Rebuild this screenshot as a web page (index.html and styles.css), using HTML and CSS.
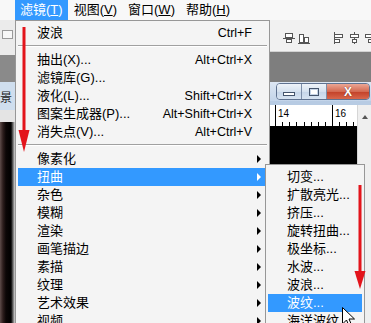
FILE: index.html
```html
<!DOCTYPE html>
<html lang="zh-CN">
<head>
<meta charset="utf-8">
<title>滤镜 - 扭曲</title>
<link rel="stylesheet" href="styles.css">
</head>
<body>
<div class="app">
  <div class="menubar">
    <span class="mb-item active">滤镜(<u>T</u>)</span>
    <span class="mb-item">视图(<u>V</u>)</span>
    <span class="mb-item">窗口(<u>W</u>)</span>
    <span class="mb-item">帮助(<u>H</u>)</span>
  </div>
  <div class="work">
    <div class="side">
      <div class="side-top"><span class="side-box"></span></div>
      <div class="side-gray"></div>
      <div class="side-layer"><span>背景</span></div>
      <div class="side-gap"></div>
      <div class="side-dark"></div>
    </div>
    <div class="main">
      <div class="toolbar">
        <svg class="tb-icon" width="12" height="12" viewBox="0 0 12 12"><path d="M0 6.5h12" stroke="#555"/><rect x="2.5" y="1.5" width="7" height="4" fill="#fff" stroke="#555"/><rect x="3.5" y="7.5" width="5" height="3" fill="#fff" stroke="#555"/></svg>
        <svg class="tb-icon" width="12" height="12" viewBox="0 0 12 12"><path d="M0 11.5h12" stroke="#555"/><rect x="1.5" y="2.5" width="4" height="8" fill="#fff" stroke="#555"/><rect x="6.5" y="5.5" width="4" height="5" fill="#fff" stroke="#555"/></svg>
        <span class="tb-gap"></span>
        <svg class="tb-icon" width="12" height="12" viewBox="0 0 12 12"><path d="M1.5 0v12" stroke="#555"/><rect x="1.5" y="2.5" width="8" height="3" fill="#fff" stroke="#555"/><rect x="1.5" y="7.5" width="5" height="3" fill="#fff" stroke="#555"/></svg>
        <svg class="tb-icon" width="12" height="12" viewBox="0 0 12 12"><path d="M6.5 0v12" stroke="#555"/><rect x="2.5" y="2.5" width="8" height="3" fill="#fff" stroke="#555"/><rect x="4.5" y="7.5" width="4" height="3" fill="#fff" stroke="#555"/></svg>
        <svg class="tb-icon last" width="12" height="12" viewBox="0 0 12 12"><path d="M10.5 0v12" stroke="#555"/><rect x="2.5" y="2.5" width="8" height="3" fill="#fff" stroke="#555"/><rect x="5.5" y="7.5" width="5" height="3" fill="#fff" stroke="#555"/></svg>
      </div>
      <div class="band"></div>
      <div class="doc">
        <div class="titlebar">
          <div class="winbtns">
            <span class="wb min"><span class="min-bar"></span></span>
            <span class="wb max"><span class="max-box"></span></span>
            <span class="wb close">X</span>
          </div>
        </div>
        <div class="frame"></div>
        <div class="doc-body">
          <div class="doc-content">
            <div class="ruler"><span class="rl">14</span><span class="rl">16</span></div>
            <div class="canvas"></div>
          </div>
          <div class="vscroll"><span class="up"></span></div>
        </div>
      </div>
    </div>
  </div>
</div>

<div class="menu main-menu">
  <div class="item"><span class="label">波浪</span><span class="key">Ctrl+F</span><span class="arrow-col"></span></div>
  <div class="sep"></div>
  <div class="item"><span class="label">抽出(X)...</span><span class="key">Alt+Ctrl+X</span><span class="arrow-col"></span></div>
  <div class="item"><span class="label">滤镜库(G)...</span><span class="arrow-col"></span></div>
  <div class="item"><span class="label">液化(L)...</span><span class="key">Shift+Ctrl+X</span><span class="arrow-col"></span></div>
  <div class="item"><span class="label">图案生成器(P)...</span><span class="key">Alt+Shift+Ctrl+X</span><span class="arrow-col"></span></div>
  <div class="item"><span class="label">消失点(V)...</span><span class="key">Alt+Ctrl+V</span><span class="arrow-col"></span></div>
  <div class="sep"></div>
  <div class="item"><span class="label">像素化</span><span class="arrow-col"><span class="tri"></span></span></div>
  <div class="item hl"><span class="label">扭曲</span><span class="arrow-col"><span class="tri"></span></span></div>
  <div class="item"><span class="label">杂色</span><span class="arrow-col"><span class="tri"></span></span></div>
  <div class="item"><span class="label">模糊</span><span class="arrow-col"><span class="tri"></span></span></div>
  <div class="item"><span class="label">渲染</span><span class="arrow-col"><span class="tri"></span></span></div>
  <div class="item"><span class="label">画笔描边</span><span class="arrow-col"><span class="tri"></span></span></div>
  <div class="item"><span class="label">素描</span><span class="arrow-col"><span class="tri"></span></span></div>
  <div class="item"><span class="label">纹理</span><span class="arrow-col"><span class="tri"></span></span></div>
  <div class="item"><span class="label">艺术效果</span><span class="arrow-col"><span class="tri"></span></span></div>
  <div class="item"><span class="label">视频</span><span class="arrow-col"><span class="tri"></span></span></div>
</div>

<div class="menu sub-menu">
  <div class="item"><span class="label">切变...</span></div>
  <div class="item"><span class="label">扩散亮光...</span></div>
  <div class="item"><span class="label">挤压...</span></div>
  <div class="item"><span class="label">旋转扭曲...</span></div>
  <div class="item"><span class="label">极坐标...</span></div>
  <div class="item"><span class="label">水波...</span></div>
  <div class="item"><span class="label">波浪...</span></div>
  <div class="item hl"><span class="label">波纹...</span></div>
  <div class="item"><span class="label">海洋波纹...</span></div>
</div>

<svg class="arrows" width="371" height="323" viewBox="0 0 371 323">
  <line x1="24" y1="27" x2="24" y2="134" stroke="#e3141b" stroke-width="3"/>
  <polygon points="18.5,130 29.5,130 24,152" fill="#e3141b"/>
  <line x1="360" y1="185" x2="360" y2="275" stroke="#e3141b" stroke-width="3"/>
  <polygon points="354.5,271 365.5,271 360,289" fill="#e3141b"/>
</svg>

<svg class="cursor" width="14" height="22" viewBox="0 0 14 22">
  <path d="M0.5 0.5 L0.5 17 L4.5 13 L7.5 20 L10 19 L7 12 L12.5 12 Z" fill="#fff" stroke="#000" stroke-width="1" stroke-linejoin="round"/>
</svg>
</body>
</html>
```

FILE: styles.css
```css
* { box-sizing: border-box; margin: 0; padding: 0; }

html, body {
  width: 371px;
  height: 323px;
  overflow: hidden;
}

body {
  position: relative;
  font-family: "Liberation Sans", "Noto Sans CJK SC", sans-serif;
  font-size: 13px;
  color: #000;
  background: #f0f0f0;
}

.app {
  display: flex;
  flex-direction: column;
  width: 371px;
  height: 323px;
}

/* ---------- menubar ---------- */
.menubar {
  flex: none;
  height: 20px;
  display: flex;
  gap: 1px;
  padding-left: 15px;
  background: #f8f8f8;
  line-height: 20px;
  white-space: nowrap;
}

.mb-item { padding: 0 5px; }
.mb-item.active { background: #3399ff; color: #fff; }

/* ---------- workspace ---------- */
.work {
  flex: 1;
  display: flex;
  min-height: 0;
}

.side {
  width: 15px;
  flex: none;
  display: flex;
  flex-direction: column;
}

.side-top {
  height: 35px;
  background: #ebebeb;
  padding: 10px 0 0 2px;
}

.side-box {
  display: block;
  width: 11px;
  height: 9px;
  border: 1px solid #9a9a9a;
  background: #f7f7f7;
}

.side-gray { height: 27px; background: #8a8a8a; }

.side-layer {
  height: 28px;
  background: #cfdeee;
  display: flex;
  justify-content: flex-end;
  align-items: center;
  overflow: hidden;
  white-space: nowrap;
  font-size: 12px;
  padding-right: 3px;
  color: #222;
}

.side-gap { height: 12px; background: #e4e4e4; }

.side-dark {
  flex: 1;
  background: linear-gradient(to right, #5e4c4a 0, #2c1d1c 3px, #0b0606 6px, #000 11px, #6a6a6a 13px, #d8d8d8 15px);
}

.main {
  flex: 1;
  min-width: 0;
  display: flex;
  flex-direction: column;
}

.toolbar {
  height: 32px;
  flex: none;
  display: flex;
  justify-content: flex-end;
  align-items: center;
  gap: 3px;
  background: #f1f1f1;
  border-bottom: 1px solid #d2d2d2;
  overflow: hidden;
  padding-top: 4px;
}

.tb-icon { flex: none; }
.tb-icon.last { margin-right: -4px; }
.tb-gap { width: 17px; flex: none; }

.band {
  height: 30px;
  flex: none;
  background: #7e7e7e;
}

.doc {
  flex: 1;
  display: flex;
  flex-direction: column;
  background: #c4d5ea;
  min-height: 0;
}

.titlebar {
  height: 19px;
  flex: none;
  display: flex;
  justify-content: flex-end;
  align-items: center;
  background: linear-gradient(#dde7f4, #c3d4e9);
}

.winbtns {
  display: flex;
  height: 17px;
  margin-right: 1px;
  border: 1px solid #5f7290;
  border-radius: 4px;
  overflow: hidden;
}

.wb {
  display: flex;
  align-items: center;
  justify-content: center;
  height: 100%;
}

.min, .max {
  width: 25px;
  background: linear-gradient(#eef3f9, #d5e1ef 50%, #c4d4e8 50%, #d7e3f1);
  border-right: 1px solid #7d8ea8;
}

.min-bar {
  width: 12px;
  height: 4px;
  margin-top: 5px;
  border: 1px solid #44546c;
  background: #fff;
}

.max-box {
  width: 10px;
  height: 8px;
  border: 1px solid #44546c;
  background: #fff;
  box-shadow: inset 0 0 0 1px #c6d4e6;
}

.close {
  width: 42px;
  background: linear-gradient(#eba694, #d46a52 50%, #c23f27 50%, #d8674c);
  color: #fff;
  font-weight: bold;
  font-size: 12px;
  text-shadow: 0 0 1px #5a1a10;
}

.frame {
  height: 4px;
  flex: none;
  background: #b7cbe3;
}

.doc-body {
  flex: 1;
  display: flex;
  min-height: 0;
}

.doc-content {
  flex: 1;
  min-width: 0;
  display: flex;
  flex-direction: column;
}

.ruler {
  height: 21px;
  flex: none;
  display: flex;
  padding-left: 260px;
  background-color: #fff;
  background-image: repeating-linear-gradient(to right, #000 0 1px, transparent 1px 7.125px);
  background-size: 100% 4px;
  background-position: 260px 100%;
  background-repeat: no-repeat;
  overflow: hidden;
}

.rl {
  flex: none;
  width: 57px;
  border-left: 1px solid #000;
  font-size: 10px;
  line-height: 14px;
  padding-left: 2px;
  padding-top: 2px;
}

.canvas { flex: 1; background: #000; }

.vscroll {
  width: 14px;
  flex: none;
  background: #efefef;
  border-left: 1px solid #d6d6d6;
  display: flex;
  justify-content: center;
  padding-top: 10px;
}

.up {
  width: 0;
  height: 0;
  border-bottom: 4px solid #555;
  border-left: 3.5px solid transparent;
  border-right: 3.5px solid transparent;
}

/* ---------- menus ---------- */
.menu {
  position: absolute;
  background: #f4f4f4;
  border: 1px solid #979797;
  padding: 3px 2px;
}

.main-menu { left: 15px; top: 20px; width: 255px; }
.sub-menu { left: 265px; top: 164px; width: 100px; }

.item {
  display: flex;
  align-items: center;
  height: 18px;
  line-height: 18px;
  padding-left: 19px;
  white-space: nowrap;
}

.label { flex: 1; }

.key { font-size: 12.5px; }

.arrow-col {
  flex: none;
  width: 15px;
  display: flex;
  align-items: center;
  padding-left: 5px;
}

.tri {
  width: 0;
  height: 0;
  border-left: 4px solid #000;
  border-top: 4px solid transparent;
  border-bottom: 4px solid transparent;
}

.item.hl { background: #3399ff; color: #fff; }
.item.hl .tri { border-left-color: #fff; }

.sep { height: 9px; padding-top: 3px; }
.sep::before {
  content: "";
  display: block;
  border-top: 1px solid #a0a0a0;
  border-bottom: 1px solid #fff;
}

/* ---------- overlays ---------- */
.arrows {
  position: absolute;
  left: 0;
  top: 0;
  pointer-events: none;
}

.cursor {
  position: absolute;
  left: 342px;
  top: 307px;
}
```
